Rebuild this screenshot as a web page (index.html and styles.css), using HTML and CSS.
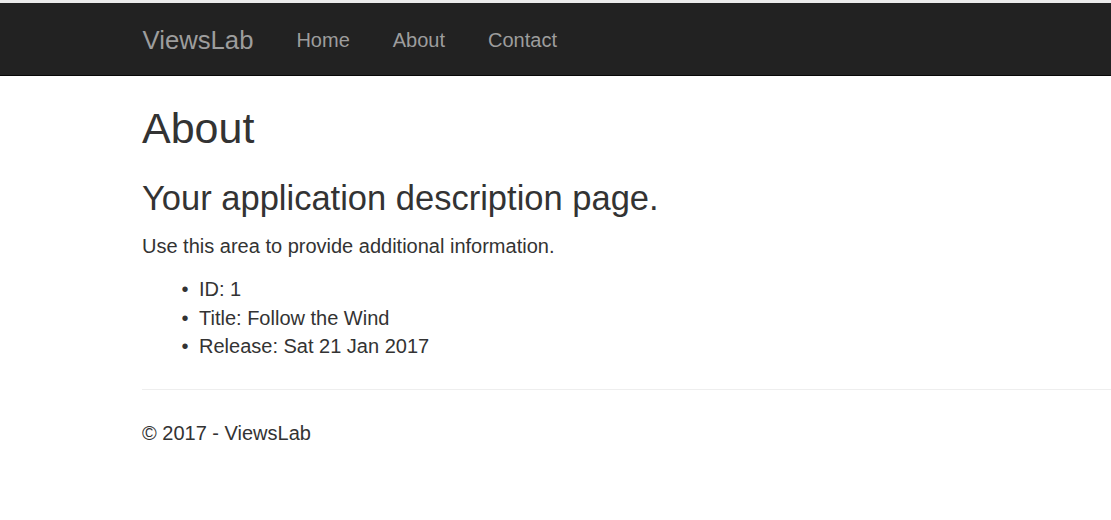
FILE: index.html
```html
<!DOCTYPE html>
<html>
<head>
<meta charset="utf-8">
<title>About - ViewsLab</title>
<link rel="stylesheet" href="styles.css">
</head>
<body>
<div class="strip"></div>
<nav class="navbar">
  <div class="nav-inner">
    <a class="brand" href="#">ViewsLab</a>
    <ul class="nav-links">
      <li><a href="#">Home</a></li>
      <li><a href="#">About</a></li>
      <li><a href="#">Contact</a></li>
    </ul>
  </div>
</nav>
<div class="container">
  <div class="body-content">
    <h1 class="title">About</h1>
    <h2 class="subtitle">Your application description page.</h2>
    <p class="lead-text">Use this area to provide additional information.</p>
    <ul class="details">
      <li>ID: 1</li>
      <li>Title: Follow the Wind</li>
      <li>Release: Sat 21 Jan 2017</li>
    </ul>
  </div>
  <hr class="divider">
  <footer class="footer">
    <p class="copy">© 2017 - ViewsLab</p>
  </footer>
</div>
</body>
</html>
```
FILE: styles.css
```css
html, body {
  margin: 0;
  padding: 0;
}
body {
  font-family: "Liberation Sans", Arial, Helvetica, sans-serif;
  font-size: 20px;
  line-height: 1.42857;
  color: #333333;
  background: #ffffff;
  overflow: hidden;
}
.strip {
  height: 3px;
  background: #ebebeb;
}
.navbar {
  background: #222222;
  border-bottom: 1px solid #080808;
  height: 72px;
}
.nav-inner {
  display: flex;
  align-items: center;
  height: 100%;
  padding-left: 121px;
  padding-top: 2px;
  box-sizing: border-box;
}
.brand {
  font-size: 25.7px;
  line-height: 28px;
  color: #9d9d9d;
  text-decoration: none;
  padding: 0 21.5px;
}
.nav-links {
  display: flex;
  list-style: none;
  margin: 0;
  padding: 0;
}
.nav-links a {
  display: block;
  color: #9d9d9d;
  text-decoration: none;
  font-size: 20px;
  padding: 0 21.5px;
  line-height: 28.5px;
}
.container {
  padding-left: 142px;
}
.title {
  font-size: 43px;
  font-weight: 500;
  line-height: 1.1;
  margin: 28.5px 0 14.3px;
}
.subtitle {
  font-size: 34.5px;
  font-weight: 500;
  line-height: 1.1;
  margin: 28.3px 0 14.3px;
}
.lead-text {
  margin: 0 0 14.3px;
}
.details {
  margin: 0 0 14.3px;
  padding-left: 57px;
  list-style: none;
}
.details li::before {
  content: "\2022";
  display: inline-block;
  width: 17.5px;
  margin-left: -17.5px;
}
.divider {
  border: 0;
  border-top: 1px solid #eeeeee;
  margin: 28.6px 0;
  height: 0;
}
.copy {
  margin: 0 0 14.3px;
}
```
